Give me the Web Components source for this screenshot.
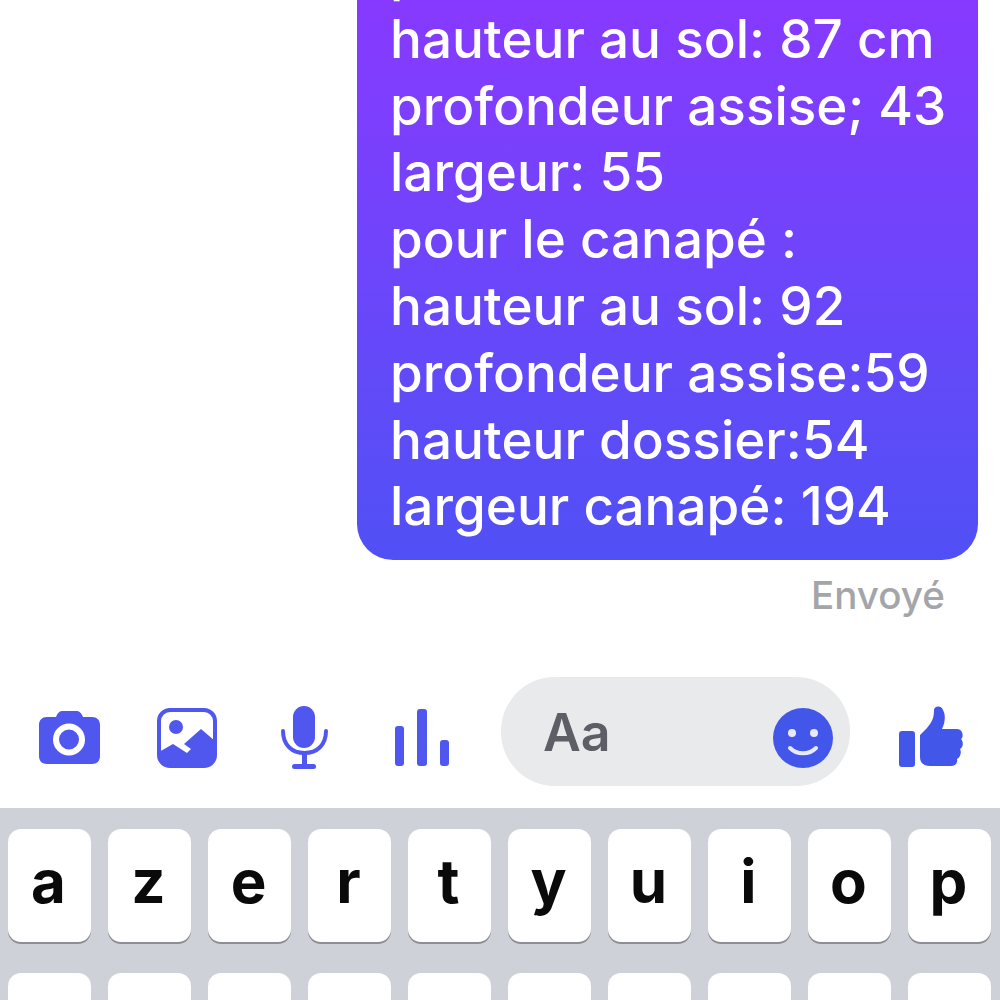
<!DOCTYPE html>
<html lang="fr">
<head>
<meta charset="utf-8">
<title>Messenger</title>
<style>
    html, body { margin: 0; padding: 0; background: #fff; }
    body { width: 1000px; height: 1000px; overflow: hidden; font-family: Inter, "Liberation Sans", sans-serif; }
</style>
</head>
<body>
<chat-screen>
    <chat-bubble slot="thread">
        <div>pour le fauteuil :</div>
        <div>hauteur au sol: 87 cm</div>
        <div>profondeur assise; 43</div>
        <div>largeur: 55</div>
        <div>pour le canapé :</div>
        <div>hauteur au sol: 92</div>
        <div>profondeur assise:59</div>
        <div>hauteur dossier:54</div>
        <div>largeur canapé: 194</div>
    </chat-bubble>
    <chat-composer slot="composer"></chat-composer>
    <chat-keyboard slot="keyboard"></chat-keyboard>
</chat-screen>

<script>
class ChatScreen extends HTMLElement {
    connectedCallback() {
        this.attachShadow({ mode: 'open' });
        this.shadowRoot.innerHTML = `
            <style>
                :host { display: flex; flex-direction: column; width: 1000px; height: 1000px; overflow: hidden; }
                .thread { height: 666px; display: flex; flex-direction: column; align-items: flex-end; }
                .status {
                    margin: 13px 55px 0 0;
                    font: 500 38.600px/44px Inter, "Liberation Sans", sans-serif;
                    color: #a4a5a8;
                }
            </style>
            <div class="thread">
                <slot name="thread"></slot>
                <div class="status">Envoyé</div>
            </div>
            <slot name="composer"></slot>
            <slot name="keyboard"></slot>
        `;
    }
}

class ChatBubble extends HTMLElement {
    connectedCallback() {
        this.attachShadow({ mode: 'open' });
        this.shadowRoot.innerHTML = `
            <style>
                :host {
                    display: block;
                    box-sizing: border-box;
                    width: 621px;
                    margin: -61px 22px 0 0;
                    padding: 0 20px 20px 33px;
                    background: linear-gradient(180deg, #8c37ff 0%, #7c3ffd 30%, #5f4bf8 75%, #5050f5 100%);
                    border-radius: 0 0 36px 36px;
                    color: #fff;
                    font: 500 53px/66.800px Inter, "Liberation Sans", sans-serif;
                    white-space: nowrap;
                }
            </style>
            <slot></slot>
        `;
    }
}

class ChatComposer extends HTMLElement {
    connectedCallback() {
        this.attachShadow({ mode: 'open' });
        this.shadowRoot.innerHTML = `
            <style>
                :host {
                    display: flex;
                    align-items: flex-start;
                    height: 142px;
                    padding: 11px 0 0 39px;
                    box-sizing: border-box;
                    background: #fff;
                }
                svg { display: block; flex: none; }
                .blue { fill: #4f57ee; }
                .pill {
                    flex: none;
                    display: flex;
                    align-items: center;
                    justify-content: space-between;
                    box-sizing: border-box;
                    width: 349px;
                    height: 109px;
                    margin-left: 52px;
                    padding: 0 17px 0 42px;
                    border-radius: 54px;
                    background: #e9eaeb;
                }
                .pill span {
                    font: 600 52px/1 Inter, "Liberation Sans", sans-serif;
                    color: #5d5e66;
                    margin-top: 2px;
                }
                .pill svg { margin-top: 13px; }
            </style>
            <svg style="margin-top:34px" width="61" height="54" viewBox="39 711 61 54" class="blue">
                <path d="M47 717 H56 C58 712 60 711 63 711 H76 C79 711 81 712 83 717 H92 C97 717 100 720 100 725 V756 C100 761 97 764 92 764 H47 C42 764 39 761 39 756 V725 C39 720 42 717 47 717 Z"/>
                <circle cx="69" cy="739.500" r="13" fill="none" stroke="#fff" stroke-width="6"/>
            </svg>
            <svg style="margin-left:57px;margin-top:31px" width="60" height="60" viewBox="157 708 60 60" class="blue">
                <rect x="159" y="710" width="56" height="56" rx="11" fill="none" stroke="#4f57ee" stroke-width="4"/>
                <circle cx="176" cy="727" r="7"/>
                <path d="M159 752 L173 744 L187 753 L191 749 L184 744 L201 729 L215 741 V755 C215 762 211 766 204 766 H170 C163 766 159 762 159 755 Z"/>
            </svg>
            <svg style="margin-left:64px;margin-top:29px" width="47" height="64" viewBox="281 706 47 64" class="blue">
                <rect x="293" y="706" width="22" height="42" rx="11"/>
                <path d="M283 731 C283 745 292 753 304.500 753 C317 753 326 745 326 731" fill="none" stroke="#4f57ee" stroke-width="4" stroke-linecap="round"/>
                <rect x="302" y="752" width="5" height="14"/>
                <rect x="292" y="764" width="24" height="5" rx="2.500"/>
            </svg>
            <svg style="margin-left:67px;margin-top:32px" width="54" height="58" viewBox="395 709 54 58" class="blue">
                <rect x="395" y="726" width="9" height="40" rx="3"/>
                <rect x="417" y="709" width="10" height="57" rx="3"/>
                <rect x="440" y="740" width="9" height="26" rx="3"/>
            </svg>
            <div class="pill">
                <span>Aa</span>
                <svg width="60" height="60" viewBox="773 708 60 60">
                    <circle cx="803" cy="738" r="30" fill="#4257ea"/>
                    <circle cx="792" cy="733" r="4" fill="#e8eafb"/>
                    <circle cx="814" cy="733" r="4" fill="#e8eafb"/>
                    <path d="M790 748 C797 755 809 755 816 748" fill="none" stroke="#e8eafb" stroke-width="4" stroke-linecap="round"/>
                </svg>
            </div>
            <svg style="margin-left:49px;margin-top:29px" width="64" height="62" viewBox="899 706 64 62">
                <rect x="899" y="731" width="16" height="36" rx="3" fill="#4257ea"/>
                <path fill="#4257ea" d="M920 735 L927 728 C932 722 934 718 934 710 C934 706 941 705 943 710 C946 715 945 723 942 729 L957 729 C963 729 964 737 961 739 C964 742 963 748 960 749 C962 752 960 758 957 759 C958 763 955 766 951 766 L930 766 C924 766 920 763 920 757 Z"/>
            </svg>
        `;
    }
}

class KeyCap extends HTMLElement {
    connectedCallback() {
        this.attachShadow({ mode: 'open' });
        this.shadowRoot.innerHTML = `
            <style>
                :host {
                    display: flex;
                    align-items: center;
                    justify-content: center;
                    height: 113px;
                    background: #fff;
                    border-radius: 13px;
                    box-shadow: 0 2px 0 #8d8e93;
                    color: #0a0a0a;
                    font: 700 60px/1 Inter, "Liberation Sans", sans-serif;
                }
                span { margin-top: -9px; margin-right: 2px; }
            </style>
            <span><slot></slot></span>
        `;
    }
}

class ChatKeyboard extends HTMLElement {
    connectedCallback() {
        this.attachShadow({ mode: 'open' });
        const keys = 'azertyuiopqsdfghjklm'.split('').map(k => `<key-cap>${k}</key-cap>`).join('');
        this.shadowRoot.innerHTML = `
            <style>
                :host {
                    display: block;
                    height: 192px;
                    overflow: hidden;
                    background: #ced1d8;
                }
                .grid {
                    display: grid;
                    grid-template-columns: repeat(10, 83px);
                    column-gap: 17px;
                    row-gap: 31px;
                    padding: 21px 0 0 8px;
                }
            </style>
            <div class="grid">${keys}</div>
        `;
    }
}

customElements.define('chat-screen', ChatScreen);
customElements.define('chat-bubble', ChatBubble);
customElements.define('chat-composer', ChatComposer);
customElements.define('key-cap', KeyCap);
customElements.define('chat-keyboard', ChatKeyboard);
</script>
</body>
</html>
